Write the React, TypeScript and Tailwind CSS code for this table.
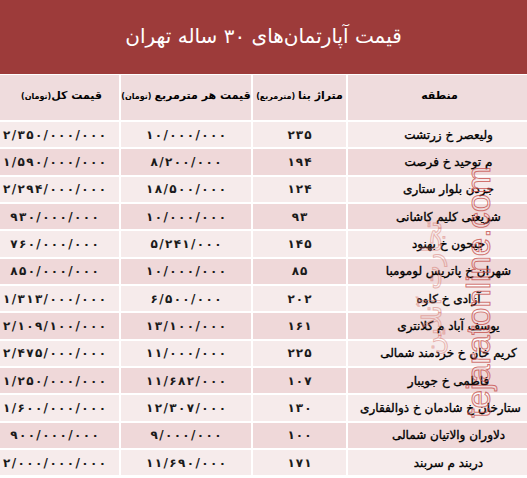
import React from "react";

const rows: [string, string, string, string][] = [
  ["ولیعصر خ زرتشت", "۲۳۵", "۱۰/۰۰۰/۰۰۰", "۲/۳۵۰/۰۰۰/۰۰۰"],
  ["م توحید خ فرصت", "۱۹۴", "۸/۲۰۰/۰۰۰", "۱/۵۹۰/۰۰۰/۰۰۰"],
  ["جردن بلوار ستاری", "۱۲۴", "۱۸/۵۰۰/۰۰۰", "۲/۲۹۴/۰۰۰/۰۰۰"],
  ["شریعتی کلیم کاشانی", "۹۳", "۱۰/۰۰۰/۰۰۰", "۹۳۰/۰۰۰/۰۰۰"],
  ["جیحون خ بهنود", "۱۴۵", "۵/۲۴۱/۰۰۰", "۷۶۰/۰۰۰/۰۰۰"],
  ["شهران خ پاتریس لومومبا", "۸۵", "۱۰/۰۰۰/۰۰۰", "۸۵۰/۰۰۰/۰۰۰"],
  ["آزادی خ کاوه", "۲۰۲", "۶/۵۰۰/۰۰۰", "۱/۳۱۳/۰۰۰/۰۰۰"],
  ["یوسف آباد م کلانتری", "۱۶۱", "۱۳/۱۰۰/۰۰۰", "۲/۱۰۹/۱۰۰/۰۰۰"],
  ["کریم خان خ خردمند شمالی", "۲۲۵", "۱۱/۰۰۰/۰۰۰", "۲/۴۷۵/۰۰۰/۰۰۰"],
  ["فاطمی خ جویبار", "۱۰۷", "۱۱/۶۸۲/۰۰۰", "۱/۲۵۰/۰۰۰/۰۰۰"],
  ["ستارخان خ شادمان خ ذوالفقاری", "۱۳۰", "۱۲/۳۰۷/۰۰۰", "۱/۶۰۰/۰۰۰/۰۰۰"],
  ["دلاوران والاتیان شمالی", "۱۰۰", "۹/۰۰۰/۰۰۰", "۹۰۰/۰۰۰/۰۰۰"],
  ["دربند م سربند", "۱۷۱", "۱۱/۶۹۰/۰۰۰", "۲/۰۰۰/۰۰۰/۰۰۰"],
];

function Num({ v, wide }: { v: string; wide?: boolean }) {
  const chars = Array.from(v);
  return (
    <span dir="ltr" className="flex items-center">
      {chars.map((c, i) => (
        <span
          key={i}
          className={i === chars.length - 1 ? "" : wide ? "mr-[1.4px]" : "mr-[1px]"}
        >
          {c}
        </span>
      ))}
    </span>
  );
}

export default function App() {
  return (
    <div
      dir="rtl"
      className="relative w-[527px] h-[478px] overflow-hidden bg-white flex flex-col font-['DejaVu_Sans',sans-serif] text-black"
    >
      <div className="h-[74px] mb-[1px] bg-[#9d3b3a] flex items-center justify-center">
        <span className="text-white text-[20px] leading-none pb-[2px]">
          قیمت آپارتمان‌های ۳۰ ساله تهران
        </span>
      </div>
      <div className="grid grid-cols-[179px_93px_130px_119px] gap-x-[2px] h-[45px] mb-[2px]">
        <div className="bg-[#efdcdd] flex items-center justify-center text-[11px] font-bold pb-[2px] pl-[4px]">
          منطقه
        </div>
        <div className="bg-[#efdcdd] flex items-center justify-center text-[11px] font-bold pb-[2px] gap-[3px]">
          <span>متراژ بنا</span>
          <span className="text-[8px]">(مترمربع)</span>
        </div>
        <div className="bg-[#efdcdd] flex items-center justify-center text-[11px] font-bold pb-[2px] gap-[3px]">
          <span>قیمت هر مترمربع</span>
          <span className="text-[8px]">(تومان)</span>
        </div>
        <div className="bg-[#efdcdd] flex items-center justify-center text-[11px] font-bold pb-[2px] pl-[4px]">
          <span>قیمت کل</span>
          <span className="text-[8px]">(تومان)</span>
        </div>
      </div>
      <div className="flex flex-col gap-y-[2px]">
        {rows.map((r, i) => {
          const bg = i % 2 === 0 ? "bg-[#f6ebeb]" : "bg-[#efd8d9]";
          const pad = r[0].length > 24 ? "pl-[6px]" : "pl-[22px]";
          return (
            <div
              key={i}
              className="grid grid-cols-[179px_93px_130px_119px] gap-x-[2px] h-[25.33px]"
            >
              <div className={`${bg} ${pad} flex items-center justify-center whitespace-nowrap text-[12px] [-webkit-text-stroke:0.35px_black]`}>
                {r[0]}
              </div>
              <div className={`${bg} flex items-center justify-center text-[12px] font-bold text-[#1a1a1a]`}>
                <Num v={r[1]} />
              </div>
              <div className={`${bg} flex items-center justify-center whitespace-nowrap text-[12px] font-bold text-[#1a1a1a]`}>
                <Num v={r[2]} wide />
              </div>
              <div className={`${bg} flex items-center justify-center whitespace-nowrap text-[12px] font-bold text-[#1a1a1a] pr-[10px]`}>
                <Num v={r[3]} wide />
              </div>
            </div>
          );
        })}
      </div>

      <div
        dir="ltr"
        className="absolute left-[478px] top-[292px] -translate-x-1/2 -translate-y-1/2 -rotate-90 whitespace-nowrap font-['Liberation_Sans',sans-serif] text-[33px] leading-none text-transparent [-webkit-text-stroke:1px_rgba(196,74,70,0.75)] pointer-events-none"
      >
        tejaratonline.com
      </div>
      <div
        className="absolute left-[432px] top-[288px] -translate-x-1/2 -translate-y-1/2 -rotate-90 whitespace-nowrap text-[26px] leading-none text-transparent [-webkit-text-stroke:1px_rgba(214,120,110,0.5)] pointer-events-none"
      >
        تجارت آنلاین
      </div>
    </div>
  );
}
